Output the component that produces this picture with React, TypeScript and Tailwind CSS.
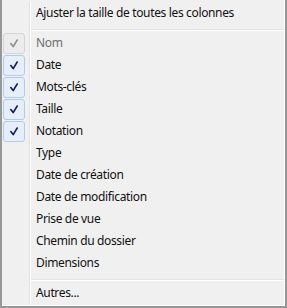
import React from "react";

type Item = { label: string; checked?: boolean; disabled?: boolean };

const columns: Item[] = [
  { label: "Nom", checked: true, disabled: true },
  { label: "Date", checked: true },
  { label: "Mots-clés", checked: true },
  { label: "Taille", checked: true },
  { label: "Notation", checked: true },
  { label: "Type" },
  { label: "Date de création" },
  { label: "Date de modification" },
  { label: "Prise de vue" },
  { label: "Chemin du dossier" },
  { label: "Dimensions" },
];

function Gutter({ children }: { children?: React.ReactNode }) {
  return (
    <div className="flex self-stretch">
      <div className="flex w-[27px] items-center">{children}</div>
      <div className="w-px bg-[#e2e3e3]" />
      <div className="w-px bg-white" />
    </div>
  );
}

function Check({ disabled }: { disabled?: boolean }) {
  return (
    <div
      className={
        disabled
          ? "ml-px flex h-[21px] w-[22px] items-center justify-center rounded-[3px] border border-[#d4d4d4] bg-[#ececec]"
          : "ml-px flex h-[21px] w-[22px] items-center justify-center rounded-[3px] border border-[#aecbf0] bg-[#e6eefa]"
      }
    >
      <svg width="8" height="9" viewBox="0 0 8 9">
        <path
          d="M0.8 4.6 L3.2 7.6 L7.2 1"
          fill="none"
          stroke={disabled ? "#8d8d8d" : "#15157f"}
          strokeWidth="1.6"
          strokeLinecap="round"
          strokeLinejoin="round"
        />
      </svg>
    </div>
  );
}

function Row({ item }: { item: Item }) {
  return (
    <div className="flex h-[22px] items-center">
      <Gutter>{item.checked && <Check disabled={item.disabled} />}</Gutter>
      <span className={item.disabled ? "pl-[5px] text-[#6d6d6d]" : "pl-[5px] text-[#111]"}>
        {item.label}
      </span>
    </div>
  );
}

function Separator() {
  return (
    <div className="flex h-[8px]">
      <Gutter />
      <div className="flex flex-1 flex-col pt-[5px]">
        <div className="h-px bg-[#e2e3e3]" />
        <div className="h-px bg-white" />
      </div>
    </div>
  );
}

export default function App() {
  return (
    <div
      className="h-[308px] w-[287px] border-x-2 border-b-2 border-[#979797] text-[12px] leading-none tracking-[-0.35px]"
      style={{ fontFamily: '"Noto Sans", "Open Sans", sans-serif' }}
    >
      <div className="flex h-full flex-col border-r border-b border-white bg-[#f0f0f0] pt-[2px]">
        <Row item={{ label: "Ajuster la taille de toutes les colonnes" }} />
        <Separator />
        {columns.map((item) => (
          <Row key={item.label} item={item} />
        ))}
        <Separator />
        <Row item={{ label: "Autres..." }} />
        <div className="flex-1">
          <Gutter />
        </div>
      </div>
    </div>
  );
}
